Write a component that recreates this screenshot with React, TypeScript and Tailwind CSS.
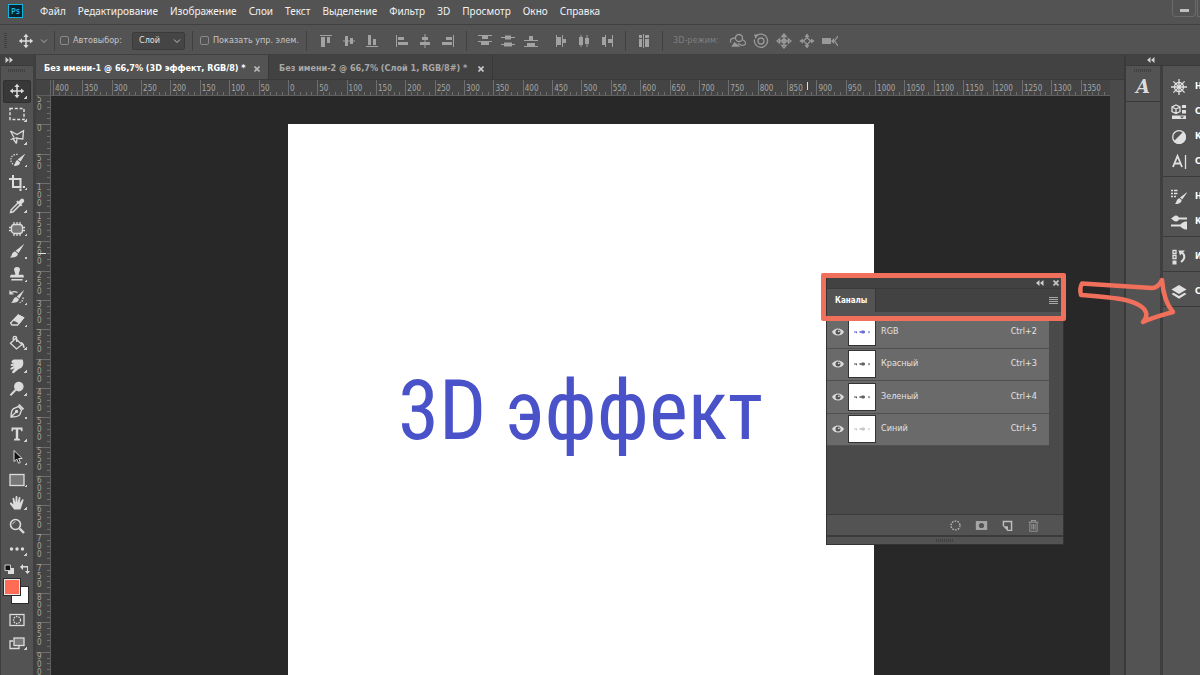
import type { ReactNode } from 'react';

const uiFont = "font-['DejaVu_Sans_Condensed','Open_Sans','Noto_Sans',sans-serif]";
const menuFont = "font-['Noto_Sans','Open_Sans',sans-serif]";

const menuItems = [
  'Файл',
  'Редактирование',
  'Изображение',
  'Слои',
  'Текст',
  'Выделение',
  'Фильтр',
  '3D',
  'Просмотр',
  'Окно',
  'Справка',
];

const hRuler = [
  400, 350, 300, 250, 200, 150, 100, 50, 0, 50, 100, 150, 200, 250, 300, 350, 400, 450, 500, 550, 600,
  650, 700, 750, 800, 850, 900, 950, 1000, 1050, 1100, 1150, 1200, 1250, 1300, 1350,
];

const vRuler = [
  50, 0, 50, 100, 150, 200, 250, 300, 350, 400, 450, 500, 550, 600, 650, 700, 750, 800, 850, 900,
];

function Icon({ children, className = 'size-4' }: { children: ReactNode; className?: string }) {
  return (
    <svg
      viewBox="0 0 16 16"
      className={`${className} shrink-0`}
      fill="none"
      stroke="currentColor"
      strokeWidth="1.3"
      aria-hidden="true"
    >
      {children}
    </svg>
  );
}

const moveShape = (
  <>
    <path d="M8 3v10M3 8h10" strokeWidth="1.5" />
    <path
      d="M8 .8 10.6 4H5.4zM8 15.2 10.6 12H5.4zM.8 8 4 5.4v5.2zM15.2 8 12 5.4v5.2z"
      fill="currentColor"
      stroke="none"
    />
  </>
);

const brushShape = (
  <path
    d="M15.4.8 9.6 10 6.6 7.8zM6.2 8.4l2.6 2.2c.2 2.6-2.8 4.6-8 3.8 2-.8 1.6-2.6 2.6-4.2.8-1.2 2-1.800 2.8-1.800z"
    fill="currentColor"
    stroke="none"
  />
);

const tools: { name: string; shape: ReactNode; plain?: boolean }[] = [
  { name: 'Перемещение', shape: moveShape },
  {
    name: 'Прямоугольная область',
    shape: <rect x="1" y="2.5" width="14" height="11" strokeDasharray="3 1.8" strokeWidth="1.5" />,
  },
  {
    name: 'Лассо',
    shape: (
      <>
        <path d="M1.5 2 8 5.6 14.5 1.8 13.8 10 8 9.4" />
        <path d="M1.5 2 5 8.5M1.500 10.500 8.500 8.500M3.5 9l4 5.500M7.5 14.500l.5-5.500" />
      </>
    ),
  },
  {
    name: 'Быстрое выделение',
    shape: (
      <>
        <path d="M8.5 2.5A5.2 5.2 0 1 0 6 13" strokeDasharray="1.4 1.2" />
        <path
          d="M16.5 1.500 11.6 9.600 8.6 7.400zM8.2 8l2.8 2.2c.3 2.8-2.6 4.200-6.2 3.600 1.400-.8 1-2.400 1.800-3.800.4-.8 1-1.600 1.600-2z"
          fill="currentColor"
          stroke="none"
        />
      </>
    ),
  },
  { name: 'Рамка', shape: <path d="M0 4h11.5v8M4 0v12h8.5M13.8 12H16M11.5 13.5V16" strokeWidth="2" /> },
  {
    name: 'Пипетка',
    shape: (
      <>
        <path d="M9 5 2.2 11.8 1.6 14.4l2.6-.6L11 7" strokeWidth="1.5" />
        <path
          d="m7.2 3.8 1.4-1.4 1 1 2-2.200c2-1.800 4.800 1 3 3l-2.200 2 1 1L12 8.600z"
          fill="currentColor"
          stroke="none"
        />
      </>
    ),
  },
  {
    name: 'Восстанавливающая кисть',
    shape: (
      <>
        <rect x="2.5" y="3.5" width="11" height="9" rx="3" fill="#777" />
        <path d="M5 1v3M8 1v3M11 1v3M5 12v3M8 12v3M11 12v3M0 6.5h3M0 9.5h3M13 6.5h3M13 9.5h3" />
      </>
    ),
  },
  { name: 'Кисть', shape: brushShape },
  {
    name: 'Штамп',
    shape: (
      <path
        d="M8 1c2.4 0 3.4 1.8 2.8 3.6L9.8 7.4v1.4h3.6c.8 0 1.4.6 1.4 1.4v1.4H1.2v-1.4c0-.8.6-1.4 1.4-1.4h3.6V7.4l-1-2.8C4.6 2.8 5.6 1 8 1zM2.4 13h11.2v1.6H2.4z"
        fill="currentColor"
        stroke="none"
      />
    ),
  },
  {
    name: 'Архивная кисть',
    shape: (
      <>
        <path d="M1 4.5c2-2 5-2.2 7.5-1M1 1.5v3.4h3.4" />
        <path d="M14 8.5c.4 2.4-1 4.4-3.4 5.2" strokeDasharray="1.6 1.2" />
        <path
          d="M15.400.8 10.4 9.4 7.8 7.400zM7.200 8l2.600 2c.2 2.600-2.800 4.200-8 3.800 2-.8 1.800-2.200 2.800-3.800.6-1 1.600-2 2.600-2z"
          fill="currentColor"
          stroke="none"
        />
      </>
    ),
  },
  {
    name: 'Ластик',
    shape: (
      <>
        <path d="m9 3.2 5.4 2.6L8.6 13H3L1.6 11z" />
        <path d="M9.4 3 14.6 5.8 10.4 11 5 8z" fill="currentColor" />
      </>
    ),
  },
  {
    name: 'Заливка',
    shape: (
      <>
        <path d="M6.5 3.5 13 9.5 7.5 14 1.5 8.2zM4.2 6.5V2.8C4.2 1 7.6 1 7.6 2.8V7" />
        <path d="M12 7c2.6.6 4 3 3.6 6.6-1.4-.4-1.8-2-2.2-3.6L12 9z" fill="currentColor" stroke="none" />
      </>
    ),
  },
  {
    name: 'Палец',
    shape: (
      <path
        d="M5 1.6h8.6c1 2.4 1 5-.2 7-1 1.6-2.6 2-4 2.6L5 15c-1.4.8-2.4-.6-1.6-1.8l2.2-3-2.8 1.4c-1.4.4-2-1.2-.8-1.8L5.2 7.8 2.8 8C1.4 8 1.2 6.4 2.4 6l3-1H3.6C2 5 2 2.6 5 1.6z"
        fill="currentColor"
        stroke="none"
      />
    ),
  },
  {
    name: 'Осветлитель',
    shape: (
      <>
        <circle cx="9.8" cy="5.6" r="4.8" fill="currentColor" stroke="none" />
        <path d="M6.5 9 1.4 14.4" strokeWidth="2" />
      </>
    ),
  },
  {
    name: 'Перо',
    shape: (
      <>
        <path d="M2 14c0-4 .6-7 2.6-8.4L9.4 3.6 12.6 7l-1.8 4.6C9.2 13.4 6 14 2 14zM2 14l5-5" />
        <path d="m10.4 1 4.8 4.8-1.4 1.2L9 2.2z" fill="currentColor" stroke="none" />
        <circle cx="7.6" cy="8.4" r="1" fill="currentColor" />
      </>
    ),
  },
  {
    name: 'Горизонтальный текст',
    shape: (
      <path
        d="M2.5 1.5h11v3.7h-1.3l-.5-1.7H9.2v9l1.8.5v1.5H5V13l1.8-.5v-9H4.3l-.5 1.7H2.5z"
        fill="currentColor"
        stroke="none"
      />
    ),
  },
  {
    name: 'Выделение контура',
    shape: <path d="M5 1.5v11l2.8-2.4 1.8 4.2 1.8-.8-1.8-4h3.6z" fill="#111" strokeWidth="1" />,
  },
  { name: 'Прямоугольник', shape: <rect x="1" y="2.5" width="14" height="11" fill="#777" /> },
  {
    name: 'Рука',
    shape: (
      <path
        d="M5.2 14.6 1.2 9.2C.4 7.8 1.8 7 2.8 8l1.6 1.6L3.6 4c-.2-1.4 1.4-1.6 1.6-.4L6.4 7.6 6.6 2c0-1.4 1.8-1.4 1.8 0l.2 5.4L9.8 2.6c.4-1.2 1.8-.8 1.6.4l-.6 5L13 4.8c.8-1 2-.2 1.4 1l-2 6.2-1 2.6z"
        fill="currentColor"
        stroke="none"
      />
    ),
  },
  {
    name: 'Масштаб',
    plain: true,
    shape: (
      <>
        <circle cx="6.5" cy="6.5" r="5" strokeWidth="1.6" />
        <path d="M3.8 6.2c.2-1.4 1.2-2.2 2.6-2.4" strokeWidth="1" />
        <path d="m10.5 10.5 4.5 4.5" strokeWidth="2.4" />
      </>
    ),
  },
  {
    name: 'Изменить панель инструментов',
    shape: (
      <g fill="currentColor" stroke="none">
        <circle cx="2.5" cy="8" r="1.7" />
        <circle cx="8" cy="8" r="1.7" />
        <circle cx="13.5" cy="8" r="1.7" />
      </g>
    ),
  },
];

const alignGroups: { name: string; d: string }[][] = [
  [
    { name: 'Верхние края', d: 'M2 2h12v1H2zM3 4h4v10H3zM9 4h3v6H9z' },
    { name: 'Центры по вертикали', d: 'M2 7.5h12v1H2zM4 3h3v10H4zM9 5h3v6H9z' },
    { name: 'Нижние края', d: 'M2 13h12v1H2zM4 2h3v10H4zM9 6h3v6H9z' },
  ],
  [
    { name: 'Левые края', d: 'M2 2h1v12H2zM4 4h6v3H4zM4 9h10v3H4z' },
    { name: 'Центры по горизонтали', d: 'M7.5 1h1v14h-1zM5 4h6v3H5zM3 9h10v3H3z' },
    { name: 'Правые края', d: 'M13 2h1v12h-1zM6 4h6v3H6zM2 9h10v3H2z' },
  ],
];

const distributeGroups: { name: string; d: string }[][] = [
  [
    { name: 'Распределить верхние края', d: 'M1 2h14v1H1zM5 3h6v3H5zM1 8h14v1H1zM4 9h8v3H4z' },
    { name: 'Распределить центры по вертикали', d: 'M1 4h14v1H1zM5 2.5h6v4H5zM1 11h14v1H1zM4 9.5h8v4H4z' },
    { name: 'Распределить нижние края', d: 'M1 7h14v1H1zM6 3h4v4H6zM1 13h14v1H1zM4 10h8v3H4z' },
  ],
  [
    { name: 'Распределить левые края', d: 'M3 2h1v12H3zM4 4h4v8H4zM9 2h1v12H9zM10 6h3v4h-3z' },
    { name: 'Распределить центры по горизонтали', d: 'M4.5 2h1v12h-1zM3 4h4v8H3zM10.5 2h1v12h-1zM9 5h4v6H9z' },
    { name: 'Распределить правые края', d: 'M6 2h1v12H6zM3 4h3v8H3zM13 2h1v12h-1zM9 6h4v4H9z' },
  ],
];

const modes3d: { name: string; shape: ReactNode }[] = [
  {
    name: 'Поворот 3D-объекта',
    shape: (
      <>
        <circle cx="9" cy="5" r="3.5" />
        <path d="M5.5 5C1 5-.5 7 1 9.5M12 6.5c3.5 1.5 4.5 3.5 3 5-2 1.5-5 .5-7-1" />
        <path d="m2.5 13 2-3 4 3z" fill="currentColor" />
      </>
    ),
  },
  {
    name: 'Вращение 3D-объекта',
    shape: (
      <>
        <circle cx="8" cy="8" r="3" />
        <path d="M4 2.5A6.6 6.6 0 1 1 1.5 6.5" />
        <path d="M1 1.5h4.5L2.5 6z" fill="currentColor" stroke="none" />
      </>
    ),
  },
  {
    name: 'Перетаскивание 3D-объекта',
    shape: (
      <>
        <path d="M8 4v8M4 8h8" />
        <path d="M8 1 5.8 3.6h4.4zM8 15l-2.200-2.600h4.400zM1 8l2.600-2.200v4.400zM15 8l-2.600-2.200v4.400z" />
        <circle cx="8" cy="8" r="2" />
      </>
    ),
  },
  {
    name: 'Скольжение 3D-объекта',
    shape: (
      <>
        <path d="M8 4.5 11.5 8 8 11.5 4.5 8z" />
        <path
          d="M8 .5 10.5 4h-5zM8 15.5l2.5-3.5h-5zM.3 8 4 5.5v5zM15.7 8 12 5.5v5z"
          fill="currentColor"
          stroke="none"
        />
      </>
    ),
  },
  {
    name: 'Масштабирование 3D-объекта',
    shape: (
      <>
        <path d="M0 5h9v6H0zM9 8l3-3v6z" fill="currentColor" stroke="none" />
        <path d="m16 3-3.5 5L16 13" />
      </>
    ),
  },
];

const dockGroups: { letter: string; name: string; shape: ReactNode }[][] = [
  [
    {
      letter: 'Н',
      name: 'Навигатор',
      shape: (
        <>
          <circle cx="8" cy="8" r="4.5" />
          <path d="M8 0v16M0 8h16M2.4 2.4l11.2 11.2M13.6 2.4 2.4 13.6" />
        </>
      ),
    },
    {
      letter: 'С',
      name: 'Свойства',
      shape: (
        <>
          <path d="m5 1 4 2v4.5L5 9.5 1 7.5V3zM1 3l4 2 4-2M5 5v4.5" />
          <path d="M11 1h4v3h-4zM11 6h4v3.5h-4zM1 11.5h14V15H1z" fill="currentColor" stroke="none" />
          <path d="M9 12.5h4l-2 2z" fill="#535353" stroke="none" />
        </>
      ),
    },
    {
      letter: 'К',
      name: 'Коррекция',
      shape: (
        <>
          <circle cx="8" cy="8" r="6.3" />
          <path d="M12.5 3.5A6.3 6.3 0 0 1 3.5 12.5z" fill="currentColor" />
        </>
      ),
    },
    {
      letter: 'С',
      name: 'Символ',
      shape: (
        <>
          <path d="m2 13 4.5-11L11 13M3.5 9.5h6" strokeWidth="1.8" />
          <path d="M14.5 1v14" />
        </>
      ),
    },
  ],
  [
    {
      letter: 'Н',
      name: 'Наборы кистей',
      shape: (
        <>
          <path d="M0 1.5h2M0 4.5h2M0 7.5h2M3 1.5h3.5M3 4.5h3.5M3 7.5h2" />
          <path
            d="M16.5 3 11.2 10.4 9 8.5zM8.4 9.2l2.2 1.9c0 2.8-2.8 4.3-6.8 3.9 1.6-.8 1.2-2.4 2.2-4 .6-.9 1.5-1.7 2.4-1.8z"
            fill="currentColor"
            stroke="none"
          />
        </>
      ),
    },
    {
      letter: 'К',
      name: 'Кисть',
      shape: (
        <>
          <path d="M7 4.5h9M0 11.5h10" strokeWidth="1.8" />
          <path
            d="M0 4.5C2 3.5 3 1.5 5 1.5s3 2 3 3-1 3-3 3-3-2-5-3zM16 7.5v8c-3.5 0-6.5-2-6.5-4s3-4 6.5-4z"
            fill="currentColor"
            stroke="none"
          />
        </>
      ),
    },
  ],
  [
    {
      letter: 'И',
      name: 'История',
      shape: (
        <>
          <path d="M2 1.5h3v3H2zM2 6.5h3v3H2z" />
          <path d="M1.5 11.5h4v4h-4zM7.5 1.5H14l-5 5z" fill="currentColor" stroke="none" />
          <path d="M11 3.5c3 2.5 3.5 6.5-1 9.5" strokeWidth="2" />
        </>
      ),
    },
  ],
  [
    {
      letter: 'С',
      name: 'Слои',
      shape: (
        <>
          <path d="M8 1 15.5 5.5 8 10 .5 5.5z" fill="currentColor" stroke="none" />
          <path d="m.5 10 2-1.2L8 12l5.5-3.2 2 1.2L8 14.8z" fill="currentColor" stroke="none" />
        </>
      ),
    },
  ],
];

const channels = [
  { name: 'RGB', keys: 'Ctrl+2', ink: 'text-[#3b40d0]' },
  { name: 'Красный', keys: 'Ctrl+3', ink: 'text-[#333]' },
  { name: 'Зеленый', keys: 'Ctrl+4', ink: 'text-[#333]' },
  { name: 'Синий', keys: 'Ctrl+5', ink: 'text-[#b5b5b5]' },
];

function Grip() {
  return (
    <div className="h-[3px] w-[18px] bg-[repeating-linear-gradient(90deg,#404040_0_1px,transparent_1px_2px)]" />
  );
}

function Divider() {
  return <div className="h-5 w-px shrink-0 bg-[#404040]" />;
}

function Chevrons({ flip = false }: { flip?: boolean }) {
  return (
    <svg viewBox="0 0 8 6" className={flip ? 'h-[6px] w-2' : 'h-[6px] w-2 rotate-180'} aria-hidden="true">
      <path d="M3.5 0v6L0 3zM7.5 0v6L4 3z" fill="#d0d0d0" />
    </svg>
  );
}

function CloseMark() {
  return (
    <svg viewBox="0 0 6 6" className="size-[6px]" fill="none" stroke="currentColor" strokeWidth="1.6" aria-hidden="true">
      <path d="m.5.5 5 5M5.5.5l-5 5" />
    </svg>
  );
}

function MenuBar() {
  return (
    <header className="flex h-6 items-center justify-between bg-[#535353] pb-[2px]">
      <div className="flex items-center">
        <div className="ml-2 flex h-[14px] w-[15px] items-center justify-center border border-[#0fb5e0] bg-[#06222f] font-['Open_Sans',sans-serif] text-[8px] leading-none font-semibold text-[#18c1ee]">
          Ps
        </div>
        <nav className={`ml-[17px] flex gap-3 text-[10px] text-[#f2f2f2] ${menuFont}`}>
          {menuItems.map((item) => (
            <button key={item} type="button" className="leading-4">
              {item}
            </button>
          ))}
        </nav>
      </div>
      <div className="flex self-start">
        <button
          type="button"
          aria-label="Свернуть"
          className="flex h-[17px] w-6 items-center justify-center rounded-b-sm border border-t-0 border-[#6a6a6a]"
        >
          <span className="mt-1 h-[3px] w-[9px] bg-[#c0c0c0]" />
        </button>
        <div className="ml-px h-[17px] w-[3px] border-b border-l border-[#6a6a6a]" />
      </div>
    </header>
  );
}

function AlignButtons({ group }: { group: { name: string; d: string }[] }) {
  return (
    <div className="flex gap-[7px]">
      {group.map((b) => (
        <button key={b.name} type="button" aria-label={b.name}>
          <Icon>
            <path d={b.d} fill="currentColor" stroke="none" />
          </Icon>
        </button>
      ))}
    </div>
  );
}

function OptionsBar() {
  return (
    <div
      className={`flex h-[31px] items-center border-y border-[#404040] bg-[#535353] pt-[2px] text-[9px] text-[#c6c6c6] ${uiFont}`}
    >
      <div className="ml-1 h-4 w-[3px] bg-[repeating-linear-gradient(#404040_0_1px,transparent_1px_2px)]" />
      <div className="ml-[11px] flex items-center gap-[6px] text-[#dcdcdc]">
        <Icon>{moveShape}</Icon>
        <svg viewBox="0 0 8 8" className="size-2" fill="none" stroke="#b0b0b0" aria-hidden="true">
          <path d="m1 2.5 3 3 3-3" />
        </svg>
      </div>
      <div className="ml-[6px] flex items-center gap-1">
        <Divider />
        <input
          id="autoselect"
          type="checkbox"
          className="ml-px size-[9px] appearance-none rounded-[2px] border border-[#8a8a8a]"
        />
        <label htmlFor="autoselect" className="w-[55px] whitespace-nowrap">
          Автовыбор:
        </label>
      </div>
      <div className="relative ml-1">
        <select
          aria-label="Автовыбор"
          className="block h-[18px] w-[53px] appearance-none rounded-[2px] border border-[#3a3a3a] bg-[#454545] pl-[6px] text-[9px] text-[#e0e0e0]"
        >
          <option>Слой</option>
        </select>
        <svg
          viewBox="0 0 8 8"
          className="pointer-events-none absolute top-[5px] right-1 size-2"
          fill="none"
          stroke="#c0c0c0"
          aria-hidden="true"
        >
          <path d="m1 2.5 3 3 3-3" />
        </svg>
      </div>
      <div className="ml-[7px] flex items-center gap-1">
        <Divider />
        <input
          id="transform"
          type="checkbox"
          className="ml-[3px] size-[9px] appearance-none rounded-[2px] border border-[#8a8a8a]"
        />
        <label htmlFor="transform" className="w-[93px] whitespace-nowrap">
          Показать упр. элем.
        </label>
      </div>
      <div className="flex items-center text-[#a2a2a2]">
        <Divider />
        <div className="ml-[11px] flex gap-[14px]">
          {alignGroups.map((g) => (
            <AlignButtons key={g[0].name} group={g} />
          ))}
        </div>
        <div className="mx-[10px]">
          <Divider />
        </div>
        <div className="flex gap-[14px]">
          {distributeGroups.map((g) => (
            <AlignButtons key={g[0].name} group={g} />
          ))}
        </div>
        <div className="mx-[10px]">
          <Divider />
        </div>
        <button type="button" aria-label="Выровнять слои автоматически">
          <Icon>
            <path d="M3 2h3v3H3zM3 6h3v8H3zM7 1h1v14H7zM9 2h4v3H9zM9 6h4v8H9z" fill="currentColor" stroke="none" />
          </Icon>
        </button>
        <div className="mx-[10px]">
          <Divider />
        </div>
      </div>
      <span className="w-[57px] whitespace-nowrap text-[#7f7f7f]">3D-режим:</span>
      <div className="flex gap-[7px] text-[#999]">
        {modes3d.map((m) => (
          <button key={m.name} type="button" aria-label={m.name}>
            <Icon>{m.shape}</Icon>
          </button>
        ))}
      </div>
    </div>
  );
}

function CornerMark() {
  return (
    <span className="absolute right-[3px] bottom-[3px] size-[3px] bg-[linear-gradient(135deg,transparent_50%,#d0d0d0_50%)]" />
  );
}

function Toolbar() {
  return (
    <aside className="w-9 shrink-0 border-r-[3px] border-l border-[#3f3f3f] bg-[#535353] text-[#dcdcdc]">
      <div className="flex h-[10px] items-center bg-[#424242] pl-1">
        <Chevrons />
      </div>
      <div className="flex h-[15px] justify-center border-t border-[#3a3a3a] pt-[3px]">
        <Grip />
      </div>
      <div className="grid h-[480px] auto-rows-fr">
        {tools.map((tool, i) => (
          <button
            key={tool.name}
            type="button"
            aria-label={tool.name}
            className={`relative mx-[2px] flex items-center justify-center rounded-[2px] border ${
              i === 0 ? 'border-[#303030] bg-[#383838]' : 'border-transparent'
            }`}
          >
            <Icon>{tool.shape}</Icon>
            {!tool.plain && <CornerMark />}
          </button>
        ))}
      </div>
      <div className="flex h-[18px] items-center justify-between px-[3px]">
        <svg viewBox="0 0 10 10" className="size-[10px]" aria-hidden="true">
          <path d="M4 4h6v6H4z" fill="#ddd" />
          <path d="M1 1h5.5v5.5H1z" fill="#111" stroke="#ccc" />
        </svg>
        <svg viewBox="0 0 10 10" className="size-[10px]" fill="#ddd" aria-hidden="true">
          <path d="M0 3 3 0v2h5v5h2L7.5 10 5 7h2V3.5H3V6z" />
        </svg>
      </div>
      <div className="flex h-[30px] pl-[2px]">
        <button
          type="button"
          aria-label="Основной цвет"
          className="z-10 size-[18px] border border-[#2b2b2b] bg-[#ff6b54] outline-1 -outline-offset-2 outline-[#e8e8e8]"
        />
        <button
          type="button"
          aria-label="Фоновый цвет"
          className="mt-2 -ml-[10px] size-[18px] border border-[#2b2b2b] bg-white"
        />
      </div>
      <div className="grid h-[46px] auto-rows-fr">
        <button type="button" aria-label="Быстрая маска" className="flex items-center justify-center">
          <Icon>
            <rect x="1" y="2.5" width="14" height="11" />
            <circle cx="8" cy="8" r="3.5" strokeDasharray="1.5 1" />
          </Icon>
        </button>
        <button
          type="button"
          aria-label="Режимы экрана"
          className="relative mx-[2px] flex items-center justify-center border border-transparent"
        >
          <Icon>
            <path d="M4 6H1v7.5h9V11" />
            <rect x="5" y="3" width="10" height="7.5" fill="#777" />
          </Icon>
          <CornerMark />
        </button>
      </div>
    </aside>
  );
}

function TabBar() {
  return (
    <div className={`flex h-[25px] border-b border-[#3a3a3a] bg-[#424242] text-[9px] font-bold ${uiFont}`}>
      <div className="flex items-center border-r border-[#383838] bg-[#535353] px-2 pt-[3px] text-white">
        <span className="w-[210px] whitespace-nowrap">Без имени-1 @ 66,7% (3D эффект, RGB/8) *</span>
        <button type="button" aria-label="Закрыть вкладку 1" className="text-[#b8b8b8]">
          <CloseMark />
        </button>
      </div>
      <div className="flex items-center border-r border-[#383838] pt-[3px] pr-2 pl-[10px] text-[#a8a8a8]">
        <span className="w-[199px] whitespace-nowrap">Без имени-2 @ 66,7% (Слой 1, RGB/8#) *</span>
        <button type="button" aria-label="Закрыть вкладку 2" className="text-[#c8c8c8]">
          <CloseMark />
        </button>
      </div>
    </div>
  );
}

function HorizontalRuler() {
  return (
    <div className="relative flex h-4 border-b border-[#5e5e5e] bg-[#444] font-['DejaVu_Sans_Condensed','Open_Sans',sans-serif] text-[8px] leading-[18px] text-[#a6a6a6]">
      <div className="w-[15px] shrink-0 border-r border-[#666]" />
      <div className="grid flex-1 auto-cols-fr grid-flow-col pl-[2px]">
        {hRuler.map((n, i) => (
          <div key={i} className="relative h-[15px] border-l border-[#6e6e6e] pl-px">
            {n}
            <div className="absolute inset-x-0 bottom-0 flex h-[3px]">
              {[0, 1, 2, 3, 4].map((t) => (
                <span key={t} className="flex-1 border-r border-[#6e6e6e] last:border-r-0" />
              ))}
            </div>
          </div>
        ))}
      </div>
      <span className="absolute top-[2px] left-[771px] h-2 w-px bg-[#e0e0e0]" />
    </div>
  );
}

function VerticalRuler() {
  return (
    <div className="relative w-[15px] shrink-0 overflow-hidden border-r border-[#5e5e5e] bg-[#444] font-['DejaVu_Sans_Condensed','Open_Sans',sans-serif] text-[8px] leading-2 text-[#a6a6a6]">
      <div className="-mt-px grid h-[586px] auto-rows-fr">
        {vRuler.map((n, i) => (
          <div key={i} className="relative border-t border-[#6e6e6e] pl-px">
            {String(n)
              .split('')
              .map((digit, j) => (
                <div key={j}>{digit}</div>
              ))}
            <div className="absolute inset-y-0 right-0 flex w-[3px] flex-col">
              {[0, 1, 2, 3, 4].map((t) => (
                <span key={t} className="flex-1 border-b border-[#6e6e6e] last:border-b-0" />
              ))}
            </div>
          </div>
        ))}
      </div>
      <span className="absolute top-[157px] left-[2px] h-px w-2 bg-[#e0e0e0]" />
    </div>
  );
}

function Eye() {
  return (
    <svg viewBox="0 0 12 8" className="h-2 w-3" aria-hidden="true">
      <path d="M0 4C2.5-.8 9.5-.8 12 4 9.5 8.8 2.5 8.8 0 4z" fill="#dcdcdc" />
      <circle cx="6" cy="4" r="2.5" fill="#555" />
      <circle cx="6.8" cy="3.3" r=".9" fill="#dcdcdc" />
    </svg>
  );
}

function ChannelsPanel() {
  return (
    <section className={`flex h-[268px] w-[238px] flex-col border border-[#333] bg-[#535353] ${uiFont}`}>
      <div className="flex h-[10px] items-center justify-end gap-[9px] bg-[#424242] pr-1">
        <Chevrons flip />
        <button type="button" aria-label="Закрыть панель" className="text-[#c8c8c8]">
          <CloseMark />
        </button>
      </div>
      <div className="flex h-6 items-stretch justify-between border-t border-[#3a3a3a] bg-[#424242]">
        <button
          type="button"
          className="border-r border-[#383838] bg-[#535353] px-2 text-[8px] font-bold text-white"
        >
          Каналы
        </button>
        <button
          type="button"
          aria-label="Меню панели"
          className="mr-[5px] h-[7px] w-[9px] self-center bg-[repeating-linear-gradient(#a8a8a8_0_1px,transparent_1px_2px)]"
        />
      </div>
      <div className="mt-1 flex flex-1 border-b border-[#3a3a3a] bg-[#4a4a4a] pr-[14px]">
        <ul className="grid h-[130px] flex-1 auto-rows-fr text-[9px] text-[#e2e2e2]">
          {channels.map((c) => (
            <li key={c.name} className="flex items-center border-b border-[#505050] bg-[#6a6a6a]">
              <button type="button" aria-label={`Видимость: ${c.name}`} className="mr-1 ml-[5px]">
                <Eye />
              </button>
              <div className={`flex h-7 w-7 items-center justify-center border border-[#333] bg-white ${c.ink}`}>
                <svg viewBox="0 0 18 6" className="h-[6px] w-[18px]" fill="currentColor" aria-hidden="true">
                  <path
                    d="M1 2.5h3v1.8H3V3.5H1zM6.500 2.300h2.300V1.200h.8v1.100h.8V1.200h.8v1.100H12v1.400h-.8v1.100h-.8V3.700h-.8v1.100h-.8V3.700H6.500zM15 2.500h2v.8h-.6v1h-.8v-1H15z"
                    opacity=".85"
                  />
                </svg>
              </div>
              <span className="mb-px ml-[5px] flex-1">{c.name}</span>
              <span className="mr-3 mb-px">{c.keys}</span>
            </li>
          ))}
        </ul>
      </div>
      <div className="flex h-[22px] items-center justify-end gap-[13px] border-b-2 border-[#3a3a3a] pr-[23px] text-[#bdbdbd]">
        <button type="button" aria-label="Загрузить как выделение">
          <Icon className="size-[13px]">
            <circle cx="8" cy="8" r="5.5" strokeDasharray="2 1.45" strokeWidth="1.6" />
          </Icon>
        </button>
        <button type="button" aria-label="Сохранить как маску">
          <Icon className="size-[13px]">
            <path d="M1 2.5h14v11H1z" fill="#a6a6a6" stroke="none" />
            <circle cx="8" cy="8" r="3.2" fill="#535353" stroke="none" />
          </Icon>
        </button>
        <button type="button" aria-label="Новый канал">
          <Icon className="size-[13px]">
            <path d="M3 9V3h10v11H8" strokeWidth="1.8" />
            <path d="M2.500 9H8.500v6z" fill="currentColor" stroke="none" />
          </Icon>
        </button>
        <button type="button" aria-label="Удалить канал" className="text-[#909090]">
          <Icon className="size-[13px]">
            <path d="M2 4h12M5.5 4V2h5v2M3.5 4v11h9V4M6 6v7M8 6v7M10 6v7" />
          </Icon>
        </button>
      </div>
      <div className="flex h-[7px] items-center justify-center">
        <Grip />
      </div>
    </section>
  );
}

function Workspace() {
  return (
    <div className="relative flex min-w-0 flex-1 justify-center bg-[#282828] pt-7">
      <div className="flex w-[586px] justify-center bg-white">
        <h1 className="mt-[237px] font-['Roboto_Condensed','Roboto',sans-serif] text-[83px] leading-[100px] whitespace-nowrap text-[#4a52c9]">
          3D эффект
        </h1>
      </div>
      <div className="absolute top-[181px] right-[46px]">
        <ChannelsPanel />
        <div className="absolute -top-1 -right-[2px] -left-[5px] h-12 rounded-[2px] border-[5px] border-[#f0705c]" />
      </div>
    </div>
  );
}

function RightDock() {
  return (
    <aside className="flex w-[76px] shrink-0 flex-col border-l-2 border-[#3a3a3a] bg-[#535353]">
      <div className="flex h-[10px] items-center bg-[#424242] pl-[21px]">
        <Chevrons flip />
      </div>
      <div className="flex flex-1 border-t border-[#3a3a3a]">
        <div className="w-[34px]">
          <div className="flex h-9 flex-col items-center border-b border-[#3a3a3a] pt-[3px] text-[#dcdcdc]">
            <Grip />
            <button
              type="button"
              aria-label="Глифы"
              className="mt-[3px] font-['DejaVu_Serif','Liberation_Serif',serif] text-[18px] leading-6 font-bold italic"
            >
              A
            </button>
          </div>
        </div>
        <div className="flex-1 overflow-hidden border-l-[3px] border-[#3f3f3f] pt-2">
          {dockGroups.map((group) => (
            <div key={group[0].name} className="border-b border-[#3a3a3a] pb-[2px] not-first:pt-[7px]">
              {group.map((item) => (
                <button
                  key={item.name}
                  type="button"
                  aria-label={item.name}
                  className="flex h-[25px] items-center gap-2 pl-2 text-[#e0e0e0]"
                >
                  <Icon>{item.shape}</Icon>
                  <span className={`text-[9px] font-bold text-white ${uiFont}`}>{item.letter}</span>
                </button>
              ))}
            </div>
          ))}
        </div>
      </div>
    </aside>
  );
}

export default function App() {
  return (
    <div className="relative flex h-screen flex-col overflow-hidden bg-[#535353]">
      <MenuBar />
      <OptionsBar />
      <main className="flex min-h-0 flex-1">
        <Toolbar />
        <div className="flex min-w-0 flex-1 flex-col bg-[#4a4a4a]">
          <TabBar />
          <div className="mr-[14px] flex min-h-0 flex-1 flex-col">
            <HorizontalRuler />
            <div className="flex min-h-0 flex-1">
              <VerticalRuler />
              <Workspace />
            </div>
          </div>
        </div>
        <RightDock />
      </main>
      <svg
        viewBox="0 0 120 62"
        className="pointer-events-none absolute top-[268px] right-[10px] h-[62px] w-[120px]"
        fill="none"
        stroke="#f0705c"
        strokeWidth="4.5"
        strokeLinejoin="round"
        aria-hidden="true"
      >
        <path d="M12 15.5 82 20c5 0 8-4 10-8 1 13 4 24 11 32-10 3-19 5-30 10 7-8 2-14-6-18-12-6-34-7-56-9-1-4-1-8 1-11.5z" />
      </svg>
    </div>
  );
}
